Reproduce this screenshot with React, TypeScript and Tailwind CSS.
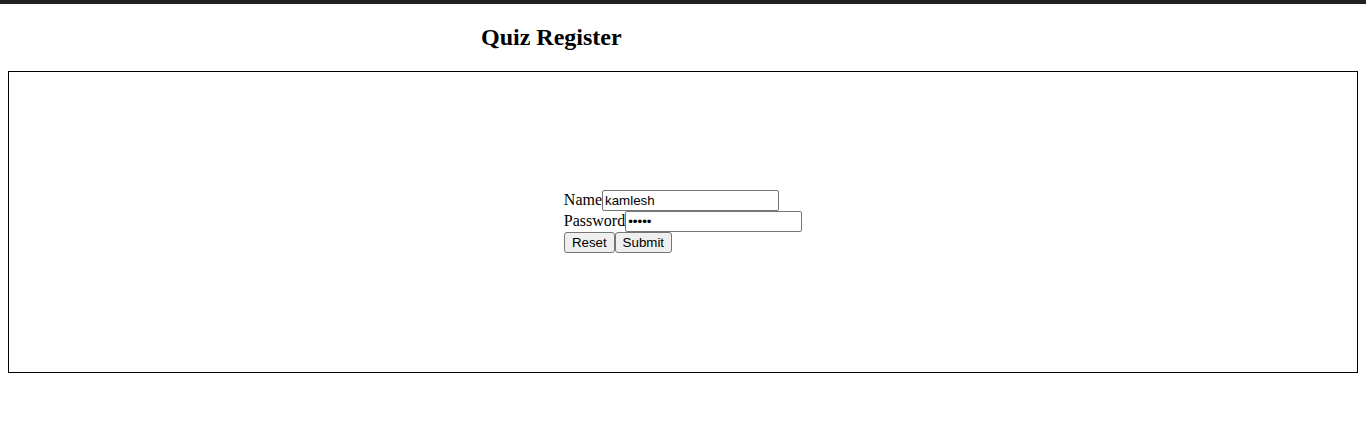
import React from 'react';

const App = () => {
  return (
    <div className="w-[1366px] h-[431px] bg-white text-black font-['Liberation_Serif',serif]">
      <div className="h-[4px] bg-[#222222]" />
      <h2 className="mt-[19px] mb-[20px] pl-[481px] h-[28px] leading-[28px] text-[24px] font-bold">Quiz Register</h2>
      <div className="mx-[8px] h-[302px] pb-[2px] border border-black flex items-center justify-center">
        <form className="flex flex-col text-[16px]" onSubmit={(e) => e.preventDefault()}>
          <div className="flex items-center h-[21px]">
            <label>Name</label>
            <input
              className="w-[177px] h-[21px] border border-[#767676] rounded-[2px] px-[2px] text-[13.33px] font-['Liberation_Sans',Arial,sans-serif] outline-none"
              defaultValue="kamlesh"
            />
          </div>
          <div className="flex items-center h-[21px]">
            <label>Password</label>
            <input
              type="password"
              className="w-[177px] h-[21px] border border-[#767676] rounded-[2px] px-[2px] text-[13.33px] font-['Liberation_Sans',Arial,sans-serif] outline-none"
              defaultValue="12345"
            />
          </div>
          <div className="flex items-center h-[21px]">
            <button type="reset" className="w-[51px] h-[21px] bg-[#efefef] border border-[#767676] rounded-[3px] text-[13.33px] font-['Liberation_Sans',Arial,sans-serif]">Reset</button>
            <button type="submit" className="w-[57px] h-[21px] bg-[#efefef] border border-[#767676] rounded-[3px] text-[13.33px] font-['Liberation_Sans',Arial,sans-serif]">Submit</button>
          </div>
        </form>
      </div>
    </div>
  );
};

export default App;
